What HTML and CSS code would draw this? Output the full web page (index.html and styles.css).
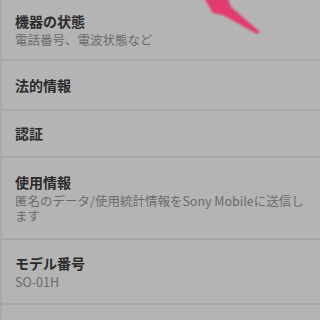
FILE: index.html
```html
<!DOCTYPE html>
<html lang="ja">
<head>
  <meta charset="UTF-8">
  <title>端末情報</title>
  <link rel="stylesheet" href="styles.css">
</head>
<body>
  <div class="list">
    <div class="item first">
      <div class="title">機器の状態</div>
      <div class="sub">電話番号、電波状態など</div>
    </div>
    <div class="item">
      <div class="title">法的情報</div>
    </div>
    <div class="item">
      <div class="title">認証</div>
    </div>
    <div class="item tall">
      <div class="title">使用情報</div>
      <div class="sub">匿名のデータ/使用統計情報をSony Mobileに送信します</div>
    </div>
    <div class="item">
      <div class="title">モデル番号</div>
      <div class="sub">SO-01H</div>
    </div>
    <div class="item last"></div>
  </div>

  <svg class="arrow" width="320" height="40" viewBox="0 0 320 40">
    <defs>
      <filter id="soft"><feGaussianBlur stdDeviation="1.3"/></filter>
    </defs>
    <polygon points="203,-4 227,-4 231,7 260,32 257,34 223,15 213,13" fill="#e23a6e" filter="url(#soft)"/>
  </svg>
</body>
</html>
```

FILE: styles.css
```css
body { margin: 0; background: #b4b4b4; font-family: "Noto Sans CJK JP", "Noto Sans", sans-serif; overflow: hidden; }
.list { border-left: 2px solid #a9a9a9; }
.item { border-bottom: 2px solid #a7a7a7; padding: 0 12px 0 13px; height: 48px; display: flex; flex-direction: column; justify-content: center; }
.item.first { height: 59px; }
.item.tall { height: 80px; }
.item:nth-child(3) { height: 45px; }
.item:nth-child(5) { height: 63px; }
.title { font-size: 14px; font-weight: bold; color: #2b2b2b; line-height: 19px; }
.sub { font-size: 12.5px; color: #6b6b6b; line-height: 15px; margin-top: 1px; }
.arrow { position: absolute; left: 0; top: 0; }
```
